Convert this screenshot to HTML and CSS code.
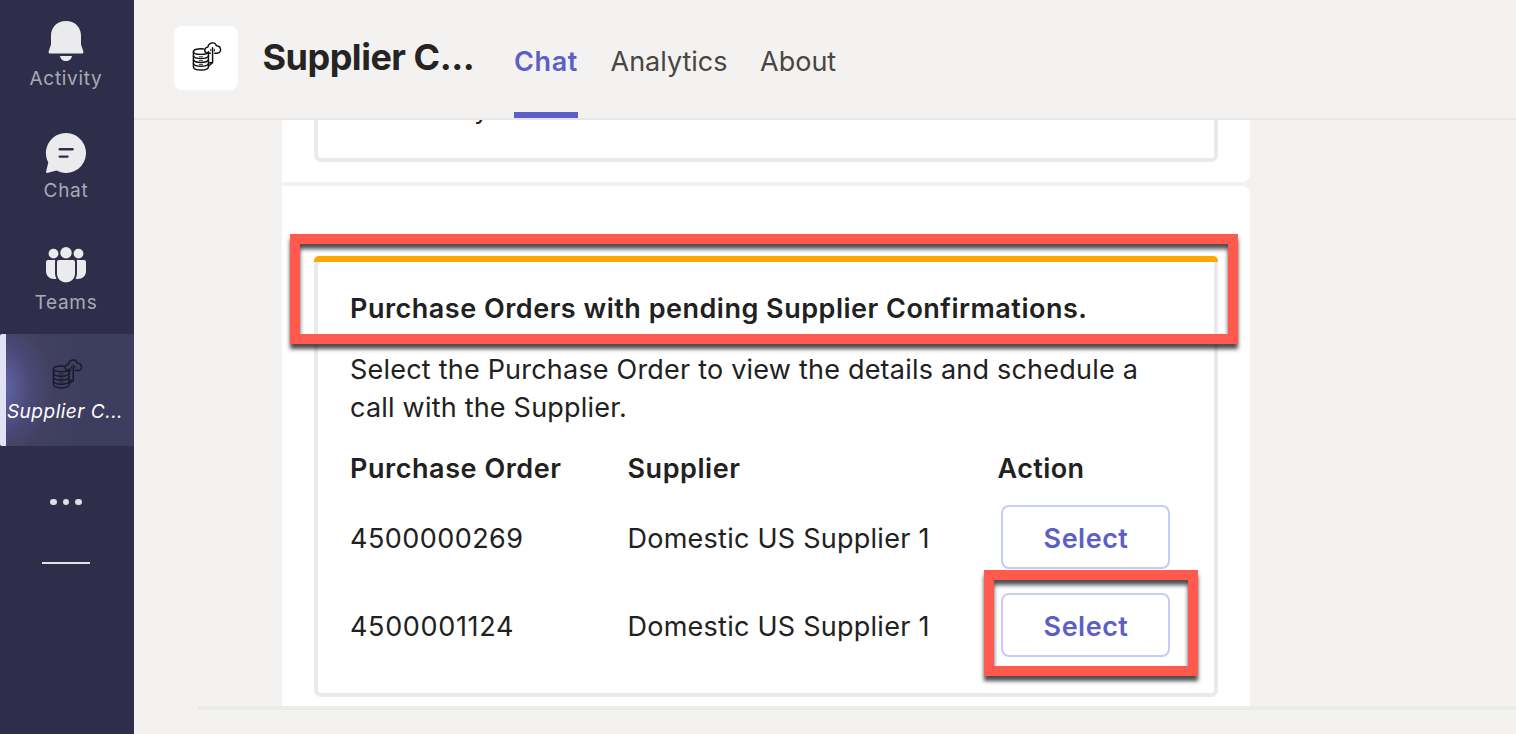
FILE: index.html
```html
<!DOCTYPE html>
<html lang="en">
<head>
<meta charset="utf-8">
<title>Supplier Chat</title>
<link rel="stylesheet" href="styles.css">
</head>
<body>
<svg class="defs" width="0" height="0">
  <symbol id="logo" viewBox="0 0 32 32">
    <g fill="none" stroke="currentColor" stroke-width="1.5" stroke-linejoin="round" stroke-linecap="round">
      <path d="M13 8.200C7.500 7.500 2.500 8.800 2.500 10.800C2.500 13 7 13.800 10 13.800C14 13.800 18 13 18 11"/>
      <path d="M2.500 11V26.500C2.500 31 18 31 18 26.500V11"/>
      <path d="M2.500 15.500C4 19 16.500 19 18 15.500M2.500 19.500C4 23 16.500 23 18 19.500M2.500 23.500C4 27 16.500 27 18 23.500"/>
      <path d="M20 12.600H17.500C13.300 12.600 13 7 17.300 6.300C18.500 1 25 .5 26.300 5C31.800 5.500 31.800 12.600 27 12.600H24.500"/>
      <path d="M22.300 7V22.500L18.500 25.500M18.500 22.500H22"/>
      <path d="M20.500 10.200V8.500M24.100 10.200V8.500" stroke-width="1"/>
      <path d="M8.500 16.200H12M8.500 20.200H12M8.500 24.200H12" stroke-width=".8"/>
    </g>
  </symbol>
</svg>
<div class="app">
  <nav class="rail">
    <a class="rail-item">
      <svg class="rail-icon" viewBox="0 0 44 44"><path d="M22 1C13.500 1 7 7 7 15.500V24.500L4.700 31.200C4.300 32.500 5 33.600 6.300 33.600H37.700C39 33.600 39.700 32.500 39.300 31.200L37 24.500V15.500C37 7 30.500 1 22 1ZM16 36C16.500 39 19 41 22 41S27.500 39 28 36Z"/></svg>
      <span>Activity</span>
    </a>
    <a class="rail-item">
      <svg class="rail-icon" viewBox="0 0 44 44"><path d="M22 1A20 20 0 1 1 12.500 38.600L3.200 40.900Q1.800 41 2.100 39.500L4.300 30.500A20 20 0 0 1 22 1Z"/><path class="rail-lines" d="M15.700 17.200H28.600M15.700 24.600H23.500"/></svg>
      <span>Chat</span>
    </a>
    <a class="rail-item">
      <svg class="rail-icon" viewBox="0 0 44 44"><circle cx="9.500" cy="9.600" r="4.900"/><circle cx="22" cy="8.800" r="5.700"/><circle cx="34.500" cy="9.600" r="4.900"/><path d="M13 18V29.500C13 41.200 31 41.200 31 29.500V18Q31 16 29 16H15Q13 16 13 18ZM4 16H11.300Q11 17 11 18V29.500Q11 32.500 12.400 34.800C6.500 35.800 2 32.500 2 27V18Q2 16 4 16ZM40 16H32.700Q33 17 33 18V29.500Q33 32.500 31.600 34.800C37.500 35.800 42 32.500 42 27V18Q42 16 40 16Z"/></svg>
      <span>Teams</span>
    </a>
    <a class="rail-item rail-item-active">
      <svg class="rail-logo"><use href="#logo"/></svg>
      <span>Supplier C...</span>
    </a>
    <div class="rail-more"><i></i><i></i><i></i></div>
    <div class="rail-divider"></div>
  </nav>
  <main class="main">
    <header class="header">
      <div class="app-tile"><svg class="tile-logo"><use href="#logo"/></svg></div>
      <h1 class="title">Supplier C...</h1>
      <div class="tabs">
        <a class="tab tab-active">Chat</a>
        <a class="tab">Analytics</a>
        <a class="tab">About</a>
      </div>
    </header>
    <section class="feed">
      <div class="bubble bubble-previous">
        <div class="card card-previous"><span class="previous-text">y</span></div>
      </div>
      <div class="bubble bubble-orders">
        <div class="card card-orders">
          <h2 class="card-title">Purchase Orders with pending Supplier Confirmations.</h2>
          <p class="card-text">Select the Purchase Order to view the details and schedule a<br>call with the Supplier.</p>
          <div class="orders">
            <b>Purchase Order</b><b>Supplier</b><b class="col-action">Action</b>
            <span class="number-a">4500000269</span><span>Domestic US Supplier 1</span><button class="select">Select</button>
            <span class="number-b">4500001124</span><span>Domestic US Supplier 1</span><button class="select">Select</button>
          </div>
        </div>
      </div>
    </section>
    <footer class="composer"></footer>
  </main>
  <div class="callout callout-title"></div>
  <div class="callout callout-select"></div>
</div>
</body>
</html>
```

FILE: styles.css
```css
* { box-sizing: border-box; }
body { margin: 0; font-family: Inter, "Liberation Sans", sans-serif; color: #212121; }
.defs { position: absolute; }
.app { position: relative; display: flex; width: 1516px; height: 734px; overflow: hidden; background: #f3f2f1; }

.rail { width: 134px; flex: none; background: #2f2e4a; display: flex; flex-direction: column; }
.rail-item { height: 112px; width: 134px; padding: 20px 2px 0 0; display: flex; flex-direction: column; align-items: center; color: #a9a9b8; font-size: 19px; line-height: 24px; letter-spacing: .7px; white-space: nowrap; }
.rail-icon { width: 44px; height: 44px; fill: #ebebed; flex: none; }
.rail-item span { margin-top: 3px; }
.rail-lines { fill: none; stroke: #2f2e4a; stroke-width: 2.4; stroke-linecap: round; }
.rail-item-active { margin-top: -2px; border-left: 6px solid #e2e2f6; border-radius: 2px 0 0 2px; padding: 24px 0 0; color: #fff; background: radial-gradient(ellipse 90px 110px at -12px 54px, #6264a7 10%, rgba(80, 78, 130, .7) 40%, rgba(70, 66, 100, .5) 65%, rgba(61, 62, 95, 0) 100%), #3d3e5f; }
.rail-logo { width: 32px; height: 32px; color: #191a2b; margin-right: 6px; }
.rail-item-active span { margin: 10px 10px 0 0; font-style: italic; letter-spacing: .5px; }
.rail-more { display: flex; gap: 6px; margin: 52.500px 0 0 50px; }
.rail-more i { width: 6.500px; height: 6.500px; border-radius: 50%; background: #dedee3; }
.rail-divider { width: 48px; height: 2px; margin: 57px 0 0 42px; background: #e1e1df; }

.main { flex: 1; display: flex; flex-direction: column; min-width: 0; }
.header { height: 120px; flex: none; border-bottom: 2px solid #e7e6e5; display: flex; padding-left: 40px; }
.app-tile { width: 64px; height: 64px; margin-top: 26px; border-radius: 8px; background: #fff; display: flex; align-items: center; justify-content: center; }
.tile-logo { width: 31px; height: 31px; margin: 0 0 3px 1px; color: #111; }
.title { width: 211px; margin: 34px 0 0 24.500px; font-size: 36px; line-height: 46px; font-weight: 700; letter-spacing: -.5px; color: #252423; white-space: nowrap; }
.tabs { display: flex; gap: 32.500px; margin-left: 40.500px; }
.tab { height: 118px; padding-top: 43px; font-size: 27px; line-height: 38px; color: #484644; white-space: nowrap; }
.tab-active { width: 64px; font-weight: 600; letter-spacing: .6px; color: #5b5fc7; border-bottom: 6px solid #5b5fc7; }

.feed { height: 586px; flex: none; overflow: hidden; padding-left: 148px; font-size: 27px; }
.bubble { width: 968px; background: #fff; }
.bubble-previous { height: 62px; border-radius: 0 0 8px 0; padding: 0 32px; margin-bottom: 4px; }
.bubble-orders { height: 560px; border-radius: 0 8px 0 0; padding: 70px 32px 0; }
.card { width: 904px; border: 4px solid #ebeaea; border-top: 0; border-radius: 7px; }
.card-previous { height: 42px; border-radius: 0 0 7px 7px; padding-left: 156px; overflow: hidden; }
.previous-text { display: block; margin-top: -28px; line-height: 34px; }
.card-orders { height: 441px; position: relative; padding: 34px 32px 0; }
.card-orders::before { content: ""; position: absolute; top: 0; left: -4px; right: -4px; height: 6px; border-radius: 5px 5px 0 0; background: #ffa500; }
.card-title { margin: 0; font-size: 27px; line-height: 38px; font-weight: 600; letter-spacing: .5px; white-space: nowrap; }
.card-text { margin: 23px 0 0; line-height: 38px; letter-spacing: .21px; white-space: nowrap; }
.orders { display: grid; grid-template-columns: 277.500px 370.500px 1fr; grid-template-rows: 38px 88px 88px; margin-top: 22px; align-items: center; white-space: nowrap; }
.orders b { font-weight: 600; letter-spacing: .55px; }
.orders .col-action { margin-left: -.5px; letter-spacing: .4px; }
.orders span { line-height: 38px; margin-top: 15px; letter-spacing: .25px; }
.orders .number-a { letter-spacing: .45px; }
.orders .number-b { letter-spacing: .66px; }
.select { width: 169px; height: 64px; margin: 11px 0 0 3px; border: 2px solid #c5cbfa; border-radius: 8px; background: #fff; color: #5b5fc7; font: 600 27px/38px Inter, "Liberation Sans", sans-serif; letter-spacing: .5px; padding: 4px 0 0 1px; }
.composer { height: 28px; margin-left: 64px; border-top: 4px solid #ebebe9; }

.callout { position: absolute; border: 10px solid #ff5a4d; box-shadow: 0 5px 4px rgba(0, 0, 0, .7), inset 0 5px 4px rgba(0, 0, 0, .7); }
.callout-title { left: 290px; top: 234px; width: 948px; height: 110px; }
.callout-select { left: 984px; top: 570px; width: 214px; height: 106px; }
```
